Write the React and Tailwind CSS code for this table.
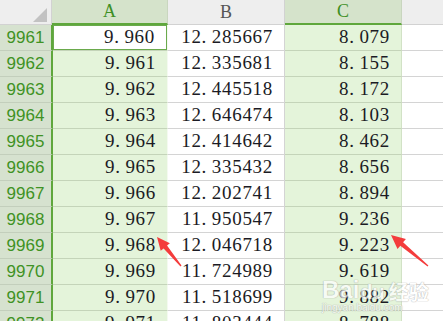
import React from "react";

const rows = [
  ["9961", "9.960", "12.285667", "8.079"],
  ["9962", "9.961", "12.335681", "8.155"],
  ["9963", "9.962", "12.445518", "8.172"],
  ["9964", "9.963", "12.646474", "8.103"],
  ["9965", "9.964", "12.414642", "8.462"],
  ["9966", "9.965", "12.335432", "8.656"],
  ["9967", "9.966", "12.202741", "8.894"],
  ["9968", "9.967", "11.950547", "9.236"],
  ["9969", "9.968", "12.046718", "9.223"],
  ["9970", "9.969", "11.724989", "9.619"],
  ["9971", "9.970", "11.518699", "9.882"],
  ["9972", "9.971", "11.803444", "8.788"],
];

function Num({ v }) {
  const [i, d] = v.split(".");
  return (
    <span className="tracking-[0.7px]">
      {i}
      <span className="mr-[4.75px]">.</span>
      {d}
    </span>
  );
}

const numCls =
  "flex items-center justify-end pr-[11px] text-[19px] text-[#1b1b24] [font-family:'Liberation_Serif',serif]";

export default function App() {
  return (
    <div className="relative w-[443px] h-[321px] overflow-hidden bg-white select-none">
      {/* header */}
      <div className="flex h-[25px]">
        <div className="relative w-[52px] shrink-0 bg-[#eeeeee] border-r border-b border-[#d2d2d2]">
          <svg className="absolute left-[33px] top-[8px]" width="14" height="14" viewBox="0 0 14 14">
            <polygon points="14,0 14,14 0,14" fill="#c2c2c2" />
          </svg>
        </div>
        <div className="w-[116px] shrink-0 bg-[#d5e3cb] border-r border-r-[#c9d6bf] border-b-2 border-b-[#5fa73c] flex items-center justify-center text-[18px] text-[#3e8f25] [font-family:'Liberation_Serif',serif]">
          A
        </div>
        <div className="w-[117px] shrink-0 bg-[#eeeeee] border-r border-b border-[#d2d2d2] flex items-center justify-center text-[18px] text-[#555555] [font-family:'Liberation_Serif',serif]">
          B
        </div>
        <div className="w-[117px] shrink-0 bg-[#d5e3cb] border-r border-r-[#c9d6bf] border-b-2 border-b-[#5fa73c] flex items-center justify-center text-[18px] text-[#3e8f25] [font-family:'Liberation_Serif',serif]">
          C
        </div>
        <div className="flex-1 bg-[#eeeeee] border-b border-[#d2d2d2]" />
      </div>

      {/* body */}
      {rows.map((r, idx) => (
        <div key={r[0]} className="flex h-[26px]">
          <div className="w-[53px] shrink-0 bg-[#d6e2cf] border-r-2 border-r-[#5fa73c] border-b border-b-[#c3cfbc] flex items-center justify-center text-[17px] text-[#3f9224] [font-family:'Liberation_Sans',sans-serif]">
            {r[0]}
          </div>
          <div
            className={
              "w-[115px] shrink-0 border-r border-r-[#f4faf0] border-b border-b-[#c4d4b9] " +
              (idx === 0 ? "bg-white" : "bg-[#e4f4da]")
            }
          >
            {idx === 0 ? (
              <div className={"h-full w-full border border-[#6aaa4c] " + numCls + " pr-[10px]"}>
                <Num v={r[1]} />
              </div>
            ) : (
              <div className={"h-full w-full " + numCls}>
                <Num v={r[1]} />
              </div>
            )}
          </div>
          <div className={"w-[117px] shrink-0 bg-white border-r border-b border-[#d4d4d4] " + numCls}>
            <Num v={r[2]} />
          </div>
          <div className={"w-[117px] shrink-0 bg-[#e4f4da] border-r border-r-[#d2e2c6] border-b border-b-[#c4d4b9] " + numCls}>
            <Num v={r[3]} />
          </div>
          <div className="flex-1 bg-white border-b border-[#d4d4d4]" />
        </div>
      ))}

      {/* watermark */}
      <div className="absolute left-[322px] top-[278px] flex flex-col items-start pointer-events-none opacity-70">
        <div className="flex items-end leading-none text-[24px] font-bold text-white [text-shadow:0_0_1px_#9a9a9a,0_0_1px_#9a9a9a] [font-family:'Liberation_Sans',sans-serif]">
          <span>Bai</span>
          <span className="text-[20px] mx-[1px]">du</span>
          <span className="ml-[3px] text-[20px] [font-family:'Noto_Sans_CJK_SC',sans-serif]">经验</span>
        </div>
        <div className="mt-[1px] text-[10px] leading-none text-white [text-shadow:0_0_1px_#9a9a9a,0_0_1px_#9a9a9a] [font-family:'Liberation_Sans',sans-serif]">
          jingyan.baidu.com
        </div>
      </div>

      {/* arrows */}
      <svg className="absolute left-0 top-0 pointer-events-none" width="443" height="321" viewBox="0 0 443 321">
        <polygon
          points="157,237 169.9,243.2 167,245.6 181.5,265.6 180.5,266.4 163.6,248.4 160.7,250.8"
          fill="#f43c3c"
        />
        <polygon
          points="391,235 405.9,239 403.1,242.3 428.4,265.5 427.6,266.5 400.3,245.7 397.5,249"
          fill="#f43c3c"
        />
      </svg>
    </div>
  );
}
